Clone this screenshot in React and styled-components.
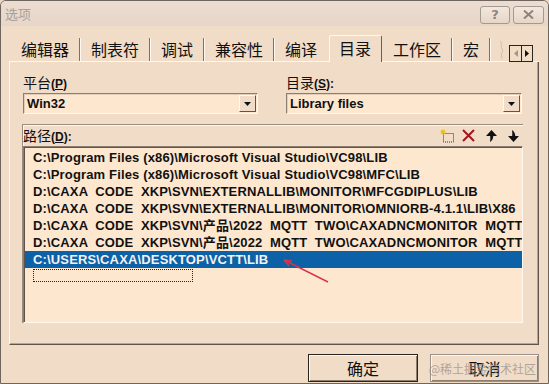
import styled, { createGlobalStyle } from "styled-components";

const cjk = `"Noto Sans CJK SC", "Noto Sans", sans-serif`;

const GlobalStyle = createGlobalStyle`
  html, body { margin: 0; padding: 0; background: #e9d8c9; }
  body {
    width: 549px;
    height: 384px;
    overflow: hidden;
    font-family: "Liberation Sans", "Noto Sans CJK SC", sans-serif;
  }
  * { box-sizing: border-box; }
`;

const Window = styled.div`
  position: relative;
  width: 549px;
  height: 384px;
  background: #f1dcc7;
  border: 1px solid #6e665e;
  border-radius: 6px 6px 0 0;
  display: flex;
  flex-direction: column;
  overflow: hidden;
`;

const TitleBar = styled.div`
  height: 25px;
  flex: none;
  display: flex;
  align-items: center;
  justify-content: space-between;
  padding: 0 4px 0 4px;
  background: linear-gradient(#ecddd1, #e7d6c8);
`;

const Title = styled.span`
  font-family: ${cjk};
  font-size: 13px;
  color: #a89f97;
`;

const TitleButtons = styled.div`
  display: flex;
  gap: 3px;
  margin-top: 2px;
`;

const TitleButton = styled.div`
  width: ${(p) => p.$w}px;
  height: 18px;
  border: 1px solid #a39a92;
  border-radius: 3px;
  background: linear-gradient(#f3e7dc, #e6d6c8);
  display: flex;
  align-items: center;
  justify-content: center;
  color: #8d857d;
  font-family: "DejaVu Sans", sans-serif;
  font-size: 13px;
  font-weight: bold;
`;

const TabStrip = styled.div`
  flex: none;
  height: 26px;
  margin: 10px 9px 0 8px;
  padding-left: 2px;
  display: flex;
  align-items: flex-end;
  border-bottom: 1px solid #fff8f0;
`;

const Tab = styled.div`
  height: 23px;
  line-height: 23px;
  padding: 0 10px;
  margin-right: 1px;
  font-family: ${cjk};
  font-size: 16px;
  color: #111;
  border-right: 1px solid ${(p) => (p.$noSep ? "transparent" : "#7d7064")};
  box-shadow: ${(p) => (p.$noSep ? "none" : "1px 0 0 #fff8f0")};
  white-space: nowrap;
`;

const ActiveTab = styled.div`
  height: 27px;
  line-height: 25px;
  margin-bottom: -1px;
  margin-right: 1px;
  padding: 0 10px 0 9px;
  font-family: ${cjk};
  font-size: 16px;
  color: #111;
  background: #f1dcc7;
  border-top: 1px solid #fff8f0;
  border-left: 1px solid #fff8f0;
  border-right: 1px solid #6a5f55;
  border-radius: 2px 2px 0 0;
`;

const TabEdge = styled.div`
  width: 10px;
  height: 23px;
  display: flex;
  align-items: center;
  margin-left: 8px;
`;

const TabScroll = styled.div`
  display: flex;
  align-self: center;
  margin: 9px 0 0 0;
  border: 1px solid #2a2420;
`;

const ScrollBtn = styled.div`
  width: 11px;
  height: 15px;
  display: flex;
  align-items: center;
  justify-content: center;
  background: #f1dcc7;
  border-left: ${(p) => (p.$right ? "1px solid #2a2420" : "none")};
`;

const Panel = styled.div`
  flex: none;
  height: 283px;
  margin: 0 9px 0 8px;
  padding: 11px 15px 0 13px;
  border-left: 1px solid #fff8f0;
  border-right: 1px solid #5e544b;
  border-bottom: 1px solid #5e544b;
  box-shadow: inset -1px -1px 0 #b3a597;
  display: flex;
  flex-direction: column;
`;

const ComboGrid = styled.div`
  display: grid;
  grid-template-columns: 235px 236px;
  column-gap: 28px;
`;

const Field = styled.div`
  display: flex;
  flex-direction: column;
`;

const Label = styled.div`
  height: 20px;
  line-height: 18px;
  font-family: ${cjk};
  font-size: 14px;
  color: #111;
  white-space: nowrap;
`;

const Mnemonic = styled.span`
  font-family: "Liberation Sans", sans-serif;
  font-weight: bold;
  font-size: 12px;
  u { text-decoration-thickness: 1px; text-underline-offset: 1px; }
`;

const Combo = styled.div`
  height: 21px;
  display: flex;
  align-items: stretch;
  background: #fde7cf;
  border-top: 1px solid #8c7f72;
  border-left: 1px solid #8c7f72;
  border-right: 1px solid #fff8f0;
  border-bottom: 1px solid #fff8f0;
  box-shadow: inset 1px 1px 0 #e2cdb9;
`;

const ComboText = styled.div`
  flex: 1;
  padding-left: 3px;
  line-height: 19px;
  font-family: "Liberation Sans", sans-serif;
  font-weight: bold;
  font-size: 13px;
  color: #111;
`;

const ComboButton = styled.div`
  width: 17px;
  margin: 1px;
  display: flex;
  align-items: center;
  justify-content: center;
  background: #f1dcc7;
  border-top: 1px solid #fff8f0;
  border-left: 1px solid #fff8f0;
  border-right: 1px solid #5e544b;
  border-bottom: 1px solid #5e544b;
`;

const PathFrame = styled.div`
  margin-top: 10px;
  margin-left: -1px;
  display: flex;
  flex-direction: column;
  border-top: 1px solid #9a8c7f;
  border-left: 1px solid #9a8c7f;
  box-shadow: inset 1px 1px 0 #fff8f0;
`;

const PathHeader = styled.div`
  height: 21px;
  display: flex;
  align-items: center;
  justify-content: space-between;
  padding: 0 4px 0 0;
`;

const Tools = styled.div`
  display: flex;
  align-items: center;
`;

const Tool = styled.span`
  display: flex;
  margin-left: ${(p) => p.$gap}px;
`;

const List = styled.div`
  height: 177px;
  background: #fde7cf;
  border-top: 1px solid #8c7f72;
  border-left: 1px solid #8c7f72;
  border-right: 1px solid #fff8f0;
  border-bottom: 1px solid #fff8f0;
  box-shadow: inset 1px 1px 0 #5e544b;
  padding: 2px 0 0 1px;
  overflow: hidden;
`;

const Row = styled.div`
  height: 17px;
  line-height: 17px;
  padding-left: 8px;
  font-family: "Liberation Sans", "Noto Sans CJK SC", sans-serif;
  font-weight: bold;
  font-size: 13px;
  letter-spacing: 0.15px;
  white-space: pre;
  overflow: hidden;
  color: ${(p) => (p.$selected ? "#f2f2f2" : "#111")};
  background: ${(p) => (p.$selected ? "#0c61a7" : "transparent")};
`;

const EditRow = styled.div`
  margin: 1px 0 0 8px;
  width: 160px;
  height: 13px;
  border: 1px dotted #2a2420;
`;

const Footer = styled.div`
  flex: none;
  display: flex;
  justify-content: flex-end;
  gap: 12px;
  padding: 9px 9px 0 0;
`;

const Button = styled.div`
  width: ${(p) => p.$w}px;
  height: 28px;
  display: flex;
  align-items: center;
  justify-content: center;
  font-family: ${cjk};
  font-size: 16px;
  color: #111;
  background: #f1dcc7;
  border: 1px solid ${(p) => (p.$default ? "#2a2420" : "#9a928a")};
  box-shadow: inset 1px 1px 0 #fff8f0, inset -1px -1px 0 #8c7f72;
`;

const Watermark = styled.div`
  position: absolute;
  right: 12px;
  bottom: 6px;
  font-family: ${cjk};
  font-size: 12px;
  color: rgba(150, 145, 140, 0.75);
  pointer-events: none;
`;

const Annotation = styled.svg`
  position: absolute;
  left: 278px;
  top: 254px;
`;

const paths = [
  "C:\\Program Files (x86)\\Microsoft Visual Studio\\VC98\\LIB",
  "C:\\Program Files (x86)\\Microsoft Visual Studio\\VC98\\MFC\\LIB",
  "D:\\CAXA  CODE  XKP\\SVN\\EXTERNALLIB\\MONITOR\\MFCGDIPLUS\\LIB",
  "D:\\CAXA  CODE  XKP\\SVN\\EXTERNALLIB\\MONITOR\\OMNIORB-4.1.1\\LIB\\X86",
  "D:\\CAXA  CODE  XKP\\SVN\\产品\\2022  MQTT  TWO\\CAXADNCMONITOR  MQTT",
  "D:\\CAXA  CODE  XKP\\SVN\\产品\\2022  MQTT  TWO\\CAXADNCMONITOR  MQTT",
  "C:\\USERS\\CAXA\\DESKTOP\\VCTT\\LIB",
];

const tabs = ["编辑器", "制表符", "调试", "兼容性", "编译", "目录", "工作区", "宏"];

const DropArrow = () => (
  <svg width="7" height="4" viewBox="0 0 7 4">
    <path d="M0 0 H7 L3.5 4 Z" fill="#111" />
  </svg>
);

const NewIcon = () => (
  <svg width="15" height="14" viewBox="0 0 15 14">
    <rect x="3.5" y="4.5" width="10" height="8.5" fill="none" stroke="#333" strokeDasharray="1 1" />
    <path d="M3 0.5 V5.5 M0.5 3 H5.5 M1.2 1.2 L4.8 4.8 M4.8 1.2 L1.2 4.8" stroke="#e8c300" strokeWidth="1.1" />
  </svg>
);

const DeleteIcon = () => (
  <svg width="13" height="13" viewBox="0 0 13 13">
    <path d="M1 1 L12 12 M12 1 L1 12" stroke="#a3171b" strokeWidth="2" />
  </svg>
);

const UpIcon = () => (
  <svg width="11" height="12" viewBox="0 0 11 12">
    <path d="M5.5 0 L11 6 L7.3 6 C7 8.5 6.5 10.5 4 12 C4.3 10 4.4 8 4.2 6 L0 6 Z" fill="#111" />
  </svg>
);

const DownIcon = () => (
  <svg width="11" height="12" viewBox="0 0 11 12">
    <path d="M5.5 12 L11 6 L7.3 6 C7 3.5 6.5 1.5 4 0 C4.3 2 4.4 4 4.2 6 L0 6 Z" fill="#111" />
  </svg>
);

const LabelText = ({ text, m, colon }) => (
  <Label>
    {text}
    <Mnemonic>
      (<u>{m}</u>){colon ? ":" : ""}
    </Mnemonic>
  </Label>
);

export default function App() {
  return (
    <>
      <GlobalStyle />
      <Window>
        <TitleBar>
          <Title>选项</Title>
          <TitleButtons>
            <TitleButton $w={30}>?</TitleButton>
            <TitleButton $w={31}>
              <svg width="11" height="9" viewBox="0 0 11 9">
                <path d="M1 0.5 L10 8.5 M10 0.5 L1 8.5" stroke="#8d857d" strokeWidth="2" />
              </svg>
            </TitleButton>
          </TitleButtons>
        </TitleBar>

        <TabStrip>
          {tabs.map((t, i) =>
            t === "目录" ? (
              <ActiveTab key={t}>{t}</ActiveTab>
            ) : (
              <Tab key={t} $noSep={tabs[i + 1] === "目录"}>
                {t}
              </Tab>
            )
          )}
          <TabEdge>
            <svg width="6" height="20" viewBox="0 0 6 20">
              <path d="M1 1 C4 3 1 6 3 9 C5 11 1 14 3 17 L2 19" fill="none" stroke="#cdbcaa" />
            </svg>
          </TabEdge>
          <TabScroll>
            <ScrollBtn>
              <svg width="4" height="7" viewBox="0 0 4 7">
                <path d="M4 0 V7 L0 3.5 Z" fill="#a0968c" />
              </svg>
            </ScrollBtn>
            <ScrollBtn $right>
              <svg width="4" height="7" viewBox="0 0 4 7">
                <path d="M0 0 V7 L4 3.5 Z" fill="#111" />
              </svg>
            </ScrollBtn>
          </TabScroll>
        </TabStrip>

        <Panel>
          <ComboGrid>
            <Field>
              <LabelText text="平台" m="P" />
              <Combo>
                <ComboText>Win32</ComboText>
                <ComboButton>
                  <DropArrow />
                </ComboButton>
              </Combo>
            </Field>
            <Field>
              <LabelText text="目录" m="S" colon />
              <Combo>
                <ComboText>Library files</ComboText>
                <ComboButton>
                  <DropArrow />
                </ComboButton>
              </Combo>
            </Field>
          </ComboGrid>

          <PathFrame>
            <PathHeader>
              <LabelText text="路径" m="D" colon />
              <Tools>
                <Tool $gap={0}>
                  <NewIcon />
                </Tool>
                <Tool $gap={7}>
                  <DeleteIcon />
                </Tool>
                <Tool $gap={11}>
                  <UpIcon />
                </Tool>
                <Tool $gap={11}>
                  <DownIcon />
                </Tool>
              </Tools>
            </PathHeader>
            <List>
              {paths.map((p, i) => (
                <Row key={i} $selected={i === paths.length - 1}>
                  {p}
                </Row>
              ))}
              <EditRow />
            </List>
          </PathFrame>
        </Panel>

        <Footer>
          <Button $w={110} $default>
            确定
          </Button>
          <Button $w={109}>取消</Button>
        </Footer>

        <Watermark>@稀土掘金技术社区</Watermark>

        <Annotation width="54" height="32" viewBox="0 0 54 32">
          <path d="M5 5 L49 27" stroke="#d8364a" strokeWidth="1.4" />
          <path d="M5 5 L13 6 M5 5 L10 11" stroke="#d8364a" strokeWidth="1.4" />
        </Annotation>
      </Window>
    </>
  );
}
